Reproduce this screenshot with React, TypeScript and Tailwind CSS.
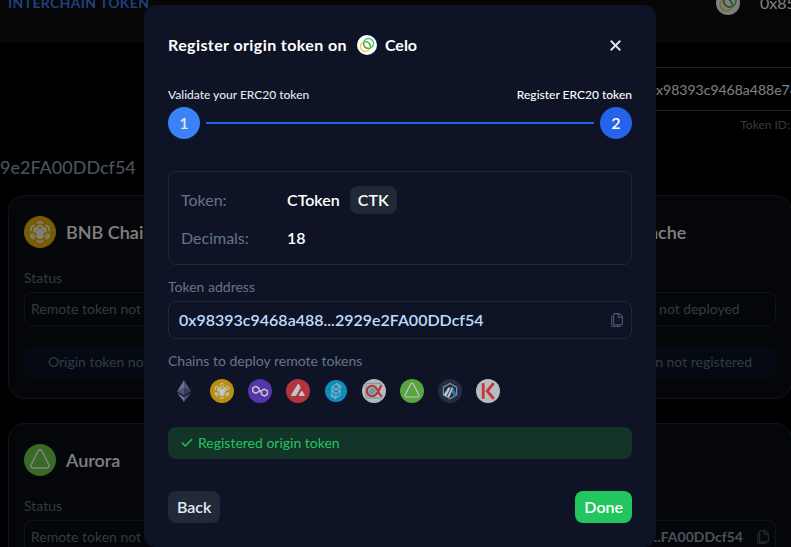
import React from "react";
import { Check, X } from "lucide-react";

type IconProps = { className?: string };

function CopyIcon({ className }: IconProps) {
  return (
    <svg viewBox="0 0 12 14" className={className} fill="none" stroke="currentColor" strokeWidth="1.2" aria-hidden="true">
      <path d="M3 .6h5l3.400 3.500v6.700a1 1 0 0 1-1 1H3.600a1 1 0 0 1-1-1V1.600a1 1 0 0 1 1-1Z" />
      <path d="M7.300.8v3.700h4" />
      <path d="M.8 2.400v9.800a1.200 1.200 0 0 0 1.200 1.200h7.600" />
    </svg>
  );
}

function CeloIcon({ className }: IconProps) {
  return (
    <svg viewBox="0 0 24 24" className={className} fill="none" aria-hidden="true">
      <circle cx="12" cy="12" r="12" fill="#fff" />
      <circle cx="10.2" cy="13.8" r="6" stroke="#fbcc5c" strokeWidth="1.7" />
      <circle cx="13.8" cy="10.2" r="6" stroke="#35d07f" strokeWidth="1.7" />
      <path d="M8 9.2a6 6 0 0 0 6.7 6.9M9.5 7.9a6 6 0 0 1 6.6 6.6" stroke="#5ea33b" strokeWidth="1.5" />
    </svg>
  );
}

function EthereumIcon({ className }: IconProps) {
  return (
    <svg viewBox="0 0 24 24" className={className} aria-hidden="true">
      <path d="M12 1 5 12.4l7-3.2z" fill="#8a92b2" />
      <path d="m12 1 7 11.4-7-3.2z" fill="#62688f" />
      <path d="m5 12.4 7-3.2v7.3z" fill="#62688f" />
      <path d="m19 12.4-7-3.2v7.3z" fill="#454a75" />
      <path d="m5 13.8 7 4.1V23z" fill="#8a92b2" />
      <path d="m19 13.8-7 4.1V23z" fill="#62688f" />
    </svg>
  );
}

function BnbIcon({ className }: IconProps) {
  return (
    <svg viewBox="0 0 32 32" className={className} fill="none" aria-hidden="true">
      <circle cx="16" cy="16" r="16" fill="#f0b90b" />
      <path
        d="M13 7.500 16 5.800l3 1.700M10.500 9 7 11v4M21.500 9l3.500 2v4M7 17.500V21l3.500 2M25 17.500V21l-3.500 2M13 24.500l3 1.700 3-1.700"
        stroke="#fff"
        strokeWidth="1.500"
      />
      <path
        d="m16 8.600 6.700 3.800v3l-3.200 1.900v3.800L16 23.200l-3.500-2.100v-3.800l-3.200-1.900v-3z"
        fill="#fff"
      />
      <path d="m16 10.600 2.200 1.300-2.200 1.300-2.200-1.300zM11.500 13.800l1.500.9M20.500 13.800l-1.500.9" stroke="#f0b90b" strokeWidth="1" />
      <path d="M9.200 17.300v2.500l2.200 1.300M22.800 17.300v2.500l-2.200 1.300" stroke="#fff" strokeWidth="1.600" />
    </svg>
  );
}

function PolygonIcon({ className }: IconProps) {
  return (
    <svg viewBox="0 0 24 24" className={className} fill="none" aria-hidden="true">
      <circle cx="12" cy="12" r="12" fill="#6f41d8" />
      <path
        d="m10.500 12.700-2.700 1.600-3-1.700V9l3-1.700 3 1.700v1.500l2.700 3v1.900l2.900 1.700 3-1.700v-3.500l-3-1.700-2.700 1.500z"
        stroke="#fff"
        strokeWidth="1.500"
        strokeLinejoin="round"
      />
    </svg>
  );
}

function AvalancheIcon({ className }: IconProps) {
  return (
    <svg viewBox="0 0 24 24" className={className} aria-hidden="true">
      <circle cx="12" cy="12" r="12" fill="#e84142" />
      <path d="M11.600 5.300c.4-.7 1-.7 1.400 0l1.300 2.400c.3.600.3 1.100 0 1.700L10.500 16c-.3.600-.8.900-1.400.9H5.800c-.8 0-1-.5-.6-1.200z" fill="#fff" />
      <path d="M15.200 12.300c.4-.7.9-.7 1.300 0l2.200 3.500c.4.700.1 1.100-.6 1.100h-4.500c-.8 0-1-.5-.6-1.100z" fill="#fff" />
    </svg>
  );
}

function FantomIcon({ className }: IconProps) {
  return (
    <svg viewBox="0 0 24 24" className={className} fill="none" aria-hidden="true">
      <circle cx="12" cy="12" r="11" fill="#13b5ec" />
      <path
        d="m12 5.500 4 2.200v8.600l-4 2.300-4-2.300V7.700zM8 7.900l4 2.200 4-2.200M8 12.300l4-2.200 4 2.200-4 2.200zM12 14.500v4M7 15.500v1.400l5 2.900M17 8.500V7.100l-5-2.900"
        stroke="#c9f0fb"
        strokeWidth=".9"
      />
    </svg>
  );
}

function AnkrIcon({ className }: IconProps) {
  return (
    <svg viewBox="0 0 24 24" className={className} fill="none" aria-hidden="true">
      <circle cx="12" cy="12" r="12" fill="#eef1f4" />
      <path d="M4 4.500h15M4 4.500V19M4 19h16M18.500 4.500v3" stroke="#9ccfcb" strokeWidth="1.300" />
      <circle cx="10" cy="12" r="4" fill="#b9d3d6" />
      <path d="m7 14 5-5M8.500 15.500l5-5" stroke="#68aaa9" strokeWidth="1" />
      <path
        d="M19.800 6.500c-2.300.8-3.300 10.500-9.300 10.700-3.500.1-5.700-2.300-5.700-5.200s2.200-5.300 5.700-5.200c6 .2 5 10 9.800 10.300"
        stroke="#e8433c"
        strokeWidth="2.100"
      />
    </svg>
  );
}

function AuroraIcon({ className }: IconProps) {
  return (
    <svg viewBox="0 0 24 24" className={className} fill="none" aria-hidden="true">
      <circle cx="12" cy="12" r="12" fill="#70d44b" />
      <path
        d="M10.600 5.200a1.600 1.600 0 0 1 2.800 0l5.300 10.400a1.600 1.600 0 0 1-1.400 2.400H6.700a1.600 1.600 0 0 1-1.400-2.400z"
        stroke="#fff"
        strokeWidth="1.200"
      />
    </svg>
  );
}

function ArbitrumIcon({ className }: IconProps) {
  return (
    <svg viewBox="0 0 24 24" className={className} fill="none" aria-hidden="true">
      <circle cx="12" cy="12" r="12" fill="#2d374b" />
      <path d="m12 4.500 6.600 3.700v7.700L12 19.700l-6.600-3.800V8.200z" stroke="#96bedc" strokeWidth="1.200" />
      <path d="m13.500 13 2-3.500 3 6.600-2.200 1.300z" fill="#28a0f0" />
      <path d="M10.300 8.500h2.400L8.200 17.600 5.600 16zM13.600 8.500h1.800L11.300 18.400l-2.200-.7z" fill="#fff" />
    </svg>
  );
}

function KavaIcon({ className }: IconProps) {
  return (
    <svg viewBox="0 0 24 24" className={className} fill="none" aria-hidden="true">
      <circle cx="12" cy="12" r="12" fill="#f2f3f5" />
      <path d="M7.200 4.200v15.600" stroke="#ff433e" strokeWidth="2.800" />
      <path d="m17.700 4.200-6.500 7.800 6.500 7.800" stroke="#ff433e" strokeWidth="2.800" />
    </svg>
  );
}

const chains = [
  { name: "Ethereum", Icon: EthereumIcon },
  { name: "BNB Chain", Icon: BnbIcon },
  { name: "Polygon", Icon: PolygonIcon },
  { name: "Avalanche", Icon: AvalancheIcon },
  { name: "Fantom", Icon: FantomIcon },
  { name: "Ankr", Icon: AnkrIcon },
  { name: "Aurora", Icon: AuroraIcon },
  { name: "Arbitrum", Icon: ArbitrumIcon },
  { name: "Kava", Icon: KavaIcon },
];

type ChainCardProps = {
  name: string;
  Icon: (props: IconProps) => React.JSX.Element;
  address?: string;
};

function ChainCard({ name, Icon, address }: ChainCardProps) {
  return (
    <article className="rounded-2xl border border-[#1f2937] bg-[#080c12] px-[15px] py-5">
      <header className="flex items-center gap-2.5">
        <Icon className="size-8" />
        <h2 className="text-lg leading-8 font-semibold text-white">{name}</h2>
      </header>
      <p className="mt-5 text-sm leading-5 text-[#64748b]">Status</p>
      <div className="mt-1 flex h-[34px] items-center justify-between rounded-lg border border-[#1f2937] px-1.5 text-sm whitespace-nowrap">
        {address ? (
          <>
            <span className="flex-1 pr-3.5 text-right font-bold text-[#94a3b8]">{address}</span>
            <button type="button" aria-label="Copy address" className="text-[#475569]">
              <CopyIcon className="h-3.5 w-3" />
            </button>
          </>
        ) : (
          <span className="text-[#64748b]">Remote token not deployed</span>
        )}
      </div>
      <button
        type="button"
        className="mt-5 h-8 w-full rounded-md bg-[#0a1424] text-sm whitespace-nowrap text-[#64748b]"
      >
        Origin token not registered
      </button>
    </article>
  );
}

function Step({ number, className }: { number: number; className: string }) {
  return (
    <span className={`flex size-8 items-center justify-center rounded-full text-base font-semibold ${className}`}>
      {number}
    </span>
  );
}

function RegisterDialog() {
  return (
    <div
      role="dialog"
      aria-modal="true"
      aria-labelledby="dialog-title"
      className="w-full max-w-lg rounded-xl bg-[#0e1425] p-6"
    >
      <div className="flex h-8 items-center justify-between">
        <h1 id="dialog-title" className="flex items-center text-base font-bold text-white">
          <span className="tracking-wide">Register origin token on</span>
          <CeloIcon className="mr-2 ml-2.5 size-5" />
          Celo
        </h1>
        <button type="button" aria-label="Close" className="mr-2 text-[#e2e8f0]">
          <X size={17} strokeWidth={2.5} />
        </button>
      </div>

      <div className="mt-[26px] flex justify-between text-xs leading-4 font-medium">
        <span className="text-[#e2e8f0]">Validate your ERC20 token</span>
        <span className="text-white">Register ERC20 token</span>
      </div>
      <div className="mt-1 flex items-center gap-1.5">
        <Step number={1} className="bg-[#3b82f6] text-[#e2e8f0]" />
        <span className="h-0.5 flex-1 bg-[#2563eb]" />
        <Step number={2} className="bg-[#2563eb] text-white" />
      </div>

      <dl className="mt-8 grid grid-cols-[106px_1fr] items-center gap-y-2.5 rounded-lg border border-[#1f2937] px-3 pt-3.5 pb-3 text-base">
        <dt className="text-[#64748b]">Token:</dt>
        <dd className="flex items-center gap-2.5 font-semibold text-white">
          CToken
          <span className="rounded-lg bg-[#1f2937] px-2 leading-7">CTK</span>
        </dd>
        <dt className="leading-7 text-[#64748b]">Decimals:</dt>
        <dd className="font-semibold text-white">18</dd>
      </dl>

      <p className="mt-3 text-sm leading-5 text-[#64748b]">Token address</p>
      <div className="mt-1 flex h-[38px] items-center justify-between rounded-lg border border-[#1f2937] pr-2 pl-2.5">
        <span className="text-base font-semibold text-[#bfdbfe]">0x98393c9468a488...2929e2FA00DDcf54</span>
        <button type="button" aria-label="Copy token address" className="text-[#475569]">
          <CopyIcon className="h-3.5 w-3" />
        </button>
      </div>

      <p className="mt-3 text-sm leading-5 text-[#64748b]">Chains to deploy remote tokens</p>
      <ul className="mt-2 flex gap-3.5 pl-1 opacity-75">
        {chains.map(({ name, Icon }) => (
          <li key={name} title={name}>
            <Icon className="size-6" />
          </li>
        ))}
      </ul>

      <div role="status" className="mt-6 flex h-8 items-center gap-1 rounded-lg bg-[#123429] px-3 text-sm text-[#22c55e]">
        <Check size={14} strokeWidth={2.5} />
        Registered origin token
      </div>

      <div className="mt-8 flex justify-between text-base font-semibold">
        <button type="button" className="h-8 rounded-lg bg-[#1f2937] px-[9px] text-[#e2e8f0]">
          Back
        </button>
        <button type="button" className="h-8 rounded-lg bg-[#22c55e] px-[9px] text-white">
          Done
        </button>
      </div>
    </div>
  );
}

export default function App() {
  return (
    <div className="relative h-screen overflow-hidden bg-black font-['Lato',sans-serif]">
      <div className="-mt-[37px]">
        <header className="flex h-20 items-center justify-between bg-[#0c0c0c] pl-2">
          <span className="text-sm font-bold tracking-wide text-[#3b82f6]">INTERCHAIN TOKEN</span>
          <div className="flex items-center gap-5 text-base text-white">
            <CeloIcon className="size-6" />
            <span className="w-[31px]">0x85</span>
          </div>
        </header>

        <main className="-mr-px pt-6 pl-2">
          <div className="ml-auto w-40">
            <input
              aria-label="Token address"
              readOnly
              value="0x98393c9468a488e78"
              className="block h-11 w-full border-y border-[#374151] bg-black pl-4 text-sm text-white outline-none"
            />
            <p className="mt-1 pr-0.5 text-right text-xs leading-5 text-[#64748b]">Token ID:</p>
          </div>

          <div className="mt-4 -ml-2 flex h-8 items-center gap-2 text-lg font-medium text-[#94a3b8]">
            9e2FA00DDcf54
            <button type="button" aria-label="Copy token ID" className="text-[#475569]">
              <CopyIcon className="h-3.5 w-3" />
            </button>
          </div>

          <section className="mt-3 grid grid-cols-3 gap-6">
            <ChainCard name="BNB Chain" Icon={BnbIcon} />
            <ChainCard name="Polygon" Icon={PolygonIcon} />
            <ChainCard name="Avalanche" Icon={AvalancheIcon} />
            <ChainCard name="Aurora" Icon={AuroraIcon} />
            <ChainCard name="Arbitrum" Icon={ArbitrumIcon} />
            <ChainCard name="Celo" Icon={CeloIcon} address="0x98393...FA00DDcf54" />
          </section>
        </main>
      </div>

      <div className="absolute inset-0 flex items-start justify-center bg-black/50 pt-[5px] pl-[9px]">
        <RegisterDialog />
      </div>
    </div>
  );
}
